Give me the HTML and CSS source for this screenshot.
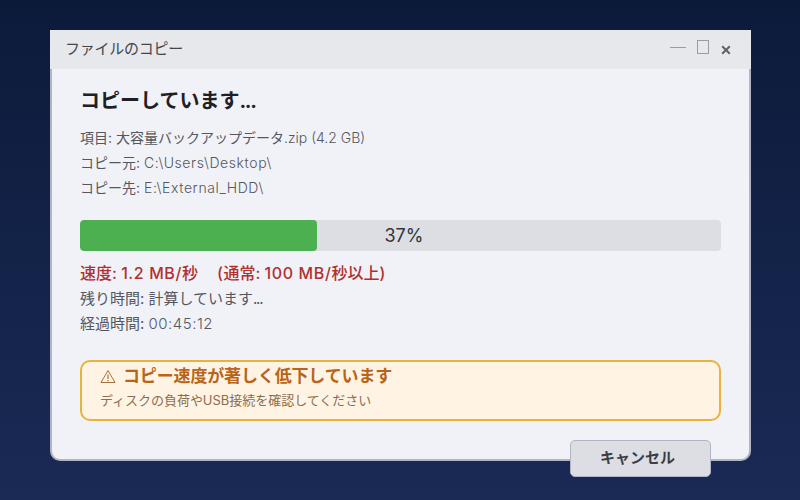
FILE: index.html
```html
<!DOCTYPE html>
<html lang="ja">
<head>
<meta charset="utf-8">
<title>ファイルのコピー</title>
<link rel="stylesheet" href="styles.css">
</head>
<body>
<div class="window">
  <header class="titlebar">
    <span class="title">ファイルのコピー</span>
    <div class="controls">
      <span class="ctl-min"></span>
      <span class="ctl-max"></span>
      <svg class="ctl-close" width="10" height="10" viewBox="0 0 10 10"><path d="M1.2 1.2 8.8 8.8M8.8 1.2 1.2 8.8" stroke="#5f6268" stroke-width="2" fill="none"/></svg>
    </div>
  </header>
  <main class="content">
    <h1 class="heading">コピーしています<span class="dots">...</span></h1>
    <div class="details">
      <p>項目: 大容量バックアップデータ<span class="lat">.zip (4.2 GB)</span></p>
      <p>コピー元: <span class="lat path">C:\Users\Desktop\</span></p>
      <p>コピー先: <span class="lat path">E:\External_HDD\</span></p>
    </div>
    <div class="progress">
      <div class="fill"></div>
      <span class="pct">37%</span>
    </div>
    <div class="stats">
      <p class="speed">速度: <span class="path">1.2 MB/</span>秒　<span class="path open">(</span>通常: <span class="path">100 MB/</span>秒以上<span class="path">)</span></p>
      <p>残り時間: 計算しています<span class="dots">...</span></p>
      <p>経過時間: <span class="lat num">00:45:12</span></p>
    </div>
    <div class="warning">
      <div class="warn-title">
        <svg class="warn-icon" width="16" height="15" viewBox="0 0 16 15"><path d="M8 1.5 15 13.5H1Z" fill="none" stroke="#a8703a" stroke-width="1" stroke-linejoin="round"/><path d="M8 5.5V10M8 11V12.3" fill="none" stroke="#a8703a" stroke-width="1.2"/></svg>
        <span class="warn-text">コピー速度が著しく低下しています</span>
      </div>
      <div class="warn-sub">ディスクの負荷やUSB接続を確認してください</div>
    </div>
    <div class="actions"><button class="cancel">キャンセル</button></div>
  </main>
</div>
</body>
</html>
```
FILE: styles.css
```css
* { box-sizing: border-box; }
html, body { margin: 0; height: 500px; overflow: hidden; }
body {
  background: linear-gradient(180deg, #0c1a3a 0%, #1a2a55 100%);
  font-family: Inter, "Noto Sans CJK JP", sans-serif;
  padding: 30px 49px 0 50px;
}
p { margin: 0; }
.window {
  height: 431px;
  background: #f0f2f7;
  border: 2px solid #b0b4c4;
  border-top: 0;
  border-radius: 0 0 10px 10px;
}
.titlebar {
  height: 39px;
  margin: 0 -2px;
  background: #e6e8ec;
  display: flex;
  align-items: center;
  justify-content: space-between;
  padding: 0 20px 4px 15px;
}
.title { font-size: 15px; letter-spacing: -0.25px; color: #44464c; }
.controls { display: flex; align-items: center; gap: 11px; }
.ctl-min { width: 16px; height: 1px; background: #9a9ca2; margin-top: -1px; }
.ctl-max { width: 12px; height: 14px; border: 1px solid #9a9ca2; margin-top: -2px; }
.ctl-close { margin: 5px 0 0 1px; }
.content { padding: 18px 28px 0; }
.heading { margin: 0; font-size: 20px; line-height: 28px; font-weight: 700; color: #1f2026; }
.dots { letter-spacing: -1.3px; }
.lat { font-weight: 350; }
.path { letter-spacing: 0.6px; }
.open { padding-left: 3px; }
.num { letter-spacing: 0.5px; }
.details { margin-top: 10px; font-size: 14px; line-height: 25px; color: #55575e; }
.progress {
  position: relative;
  margin-top: 20px;
  height: 31px;
  width: 641px;
  background: #dddee3;
  border-radius: 4px;
  overflow: hidden;
}
.fill { width: 237px; height: 100%; background: #4caf50; border-radius: 4px; }
.pct {
  position: absolute; inset: 0;
  display: flex; align-items: center; justify-content: center;
  padding: 0 0 1px 7px;
  font-size: 18px; color: #333539;
}
.stats { margin-top: 10px; font-size: 15px; line-height: 25px; color: #55575e; }
.speed { font-size: 16px; font-weight: 500; color: #b03030; }
.warning {
  margin-top: 24px;
  width: 641px;
  height: 61px;
  background: #fff4e3;
  border: 2px solid #e8b23e;
  border-radius: 10px;
  padding: 2px 18px;
}
.warn-title {
  display: flex;
  align-items: center;
  gap: 7px;
  font-size: 17px;
  line-height: 24px;
  font-weight: 700;
  color: #b8651a;
}
.warn-text { letter-spacing: -0.15px; }
.warn-sub { font-size: 13px; letter-spacing: -0.03px; line-height: 20px; margin-top: 2px; color: #8a6d50; }
.actions { display: flex; justify-content: flex-end; margin-top: 19px; width: 631px; }
.cancel {
  width: 141px;
  height: 37px;
  background: #dddee3;
  border: 1px solid #b0b4c4;
  border-radius: 5px;
  padding: 0 6px 5px 0;
  font: 700 15px Inter, "Noto Sans CJK JP", sans-serif;
  color: #3c3e44;
}
```
